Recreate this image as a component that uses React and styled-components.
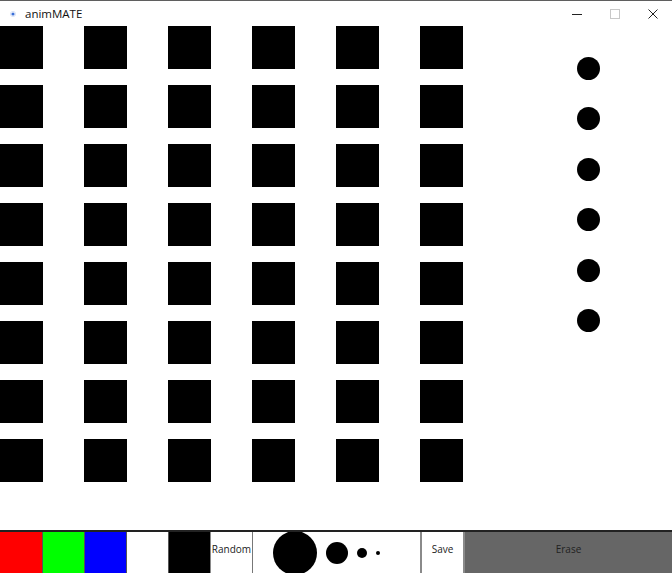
import React from "react";
import styled, { createGlobalStyle } from "styled-components";

const GlobalStyle = createGlobalStyle`
	html, body {
		margin: 0;
		padding: 0;
		background: #ffffff;
	}
	body {
		font-family: "Open Sans", "Noto Sans", sans-serif;
	}
`;

const Window = styled.div`
	width: 672px;
	height: 573px;
	display: flex;
	flex-direction: column;
	overflow: hidden;
	background: #fff;
`;

const TitleBar = styled.div`
	height: 25px;
	border-top: 1px solid #5f5f5f;
	display: flex;
	align-items: center;
	flex-shrink: 0;
`;

const AppIcon = styled.div`
	width: 25px;
	display: flex;
	justify-content: center;
	align-items: center;
`;

const Title = styled.span`
	font-family: "Open Sans", "Noto Sans", sans-serif;
	font-size: 11.5px;
	color: #111;
	flex: 1;
`;

const Controls = styled.div`
	display: flex;
	height: 100%;
`;

const ControlButton = styled.div`
	width: 38px;
	display: flex;
	align-items: center;
	justify-content: center;
`;

const Canvas = styled.div`
	flex: 1;
	display: flex;
	align-items: flex-start;
`;

const SquareGrid = styled.div`
	display: grid;
	grid-template-columns: repeat(6, 43px);
	grid-auto-rows: 43px;
	column-gap: 41px;
	row-gap: 16px;
`;

const Square = styled.div`
	background: #000;
`;

const DotColumn = styled.div`
	margin-left: 114px;
	padding-top: 31px;
	display: flex;
	flex-direction: column;
	gap: 27.4px;
`;

const Dot = styled.div`
	width: ${(p) => p.size}px;
	height: ${(p) => p.size}px;
	border-radius: 50%;
	background: #000;
	flex-shrink: 0;
`;

const Toolbar = styled.div`
	height: 41px;
	border-top: 2px solid #222;
	display: flex;
	flex-shrink: 0;
`;

const Swatch = styled.div`
	box-sizing: border-box;
	width: 42px;
	height: 100%;
	background: ${(p) => p.color};
	border-left: 1px solid #555;
	&:first-child {
		border-left: none;
	}
`;

const TextButton = styled.div`
	box-sizing: border-box;
	width: ${(p) => p.width || 42}px;
	height: 100%;
	background: ${(p) => p.bg || "#fff"};
	border-left: ${(p) => (p.bordered ? "2px solid #8a8a8a" : "1px solid #8a8a8a")};
	display: flex;
	justify-content: center;
	padding-bottom: 8px;
	align-items: center;
	font-family: "Open Sans", "Noto Sans", sans-serif;
	font-size: 10px;
	color: #222;
`;

const SizePanel = styled.div`
	box-sizing: border-box;
	width: 168px;
	height: 100%;
	border-left: 1px solid #777;
	display: flex;
	align-items: center;
	padding-left: 20px;
	gap: 9px;
	overflow: hidden;
`;

const colors = ["#ff0000", "#00ff00", "#0000ff", "#ffffff", "#000000"];

function App() {
	return (
		<>
			<GlobalStyle />
			<Window>
				<TitleBar>
					<AppIcon>
						<svg width="6" height="6" viewBox="0 0 6 6">
							<circle cx="3" cy="3" r="1.6" fill="#3a6fd8" />
							<circle cx="3" cy="3" r="2.6" fill="none" stroke="#cfdcf5" strokeWidth="0.8" />
						</svg>
					</AppIcon>
					<Title>animMATE</Title>
					<Controls>
						<ControlButton>
							<svg width="10" height="10" viewBox="0 0 10 10">
								<line x1="0" y1="5.5" x2="10" y2="5.5" stroke="#222" strokeWidth="1" />
							</svg>
						</ControlButton>
						<ControlButton>
							<svg width="10" height="10" viewBox="0 0 10 10">
								<rect x="0.5" y="0.5" width="9" height="9" fill="none" stroke="#c8c8c8" strokeWidth="1" />
							</svg>
						</ControlButton>
						<ControlButton>
							<svg width="10" height="10" viewBox="0 0 10 10">
								<path d="M0.5 0.5 L9.5 9.5 M9.5 0.5 L0.5 9.5" stroke="#222" strokeWidth="1" />
							</svg>
						</ControlButton>
					</Controls>
				</TitleBar>

				<Canvas>
					<SquareGrid>
						{Array.from({ length: 48 }).map((_, i) => (
							<Square key={i} />
						))}
					</SquareGrid>
					<DotColumn>
						{Array.from({ length: 6 }).map((_, i) => (
							<Dot key={i} size={23} />
						))}
					</DotColumn>
				</Canvas>

				<Toolbar>
					{colors.map((c) => (
						<Swatch key={c} color={c} />
					))}
					<TextButton>Random</TextButton>
					<SizePanel>
						<Dot size={44} />
						<Dot size={22} />
						<Dot size={10} />
						<Dot size={4} />
					</SizePanel>
					<TextButton bordered width={43}>
						Save
					</TextButton>
					<TextButton bordered width={209} bg="#666666">
						Erase
					</TextButton>
				</Toolbar>
			</Window>
		</>
	);
}

export default App;
